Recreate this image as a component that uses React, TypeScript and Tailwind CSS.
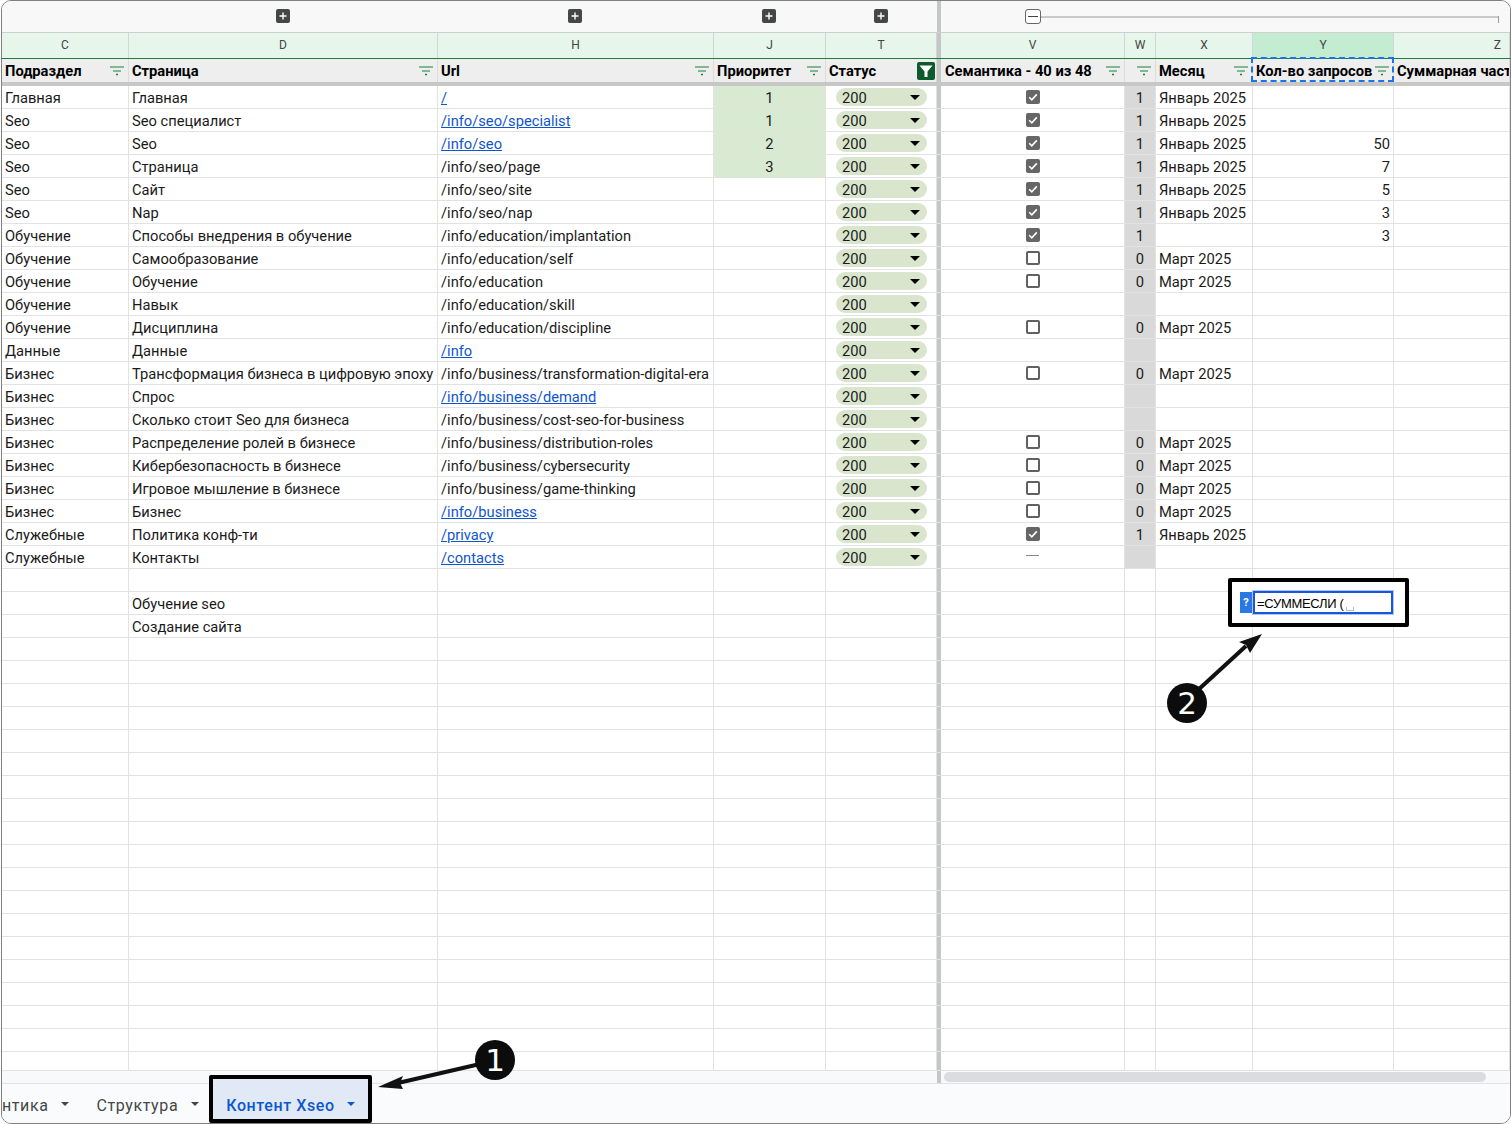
import type { ReactNode } from 'react';

const GRID = 'grid grid-cols-[127px_309px_276px_112px_111px_4px_184px_31px_97px_141px_1fr]';

type Row = {
  sec?: string;
  page?: string;
  url?: string;
  link?: boolean;
  pri?: string;
  check?: 'on' | 'off' | 'dash';
  w?: string;
  month?: string;
  count?: string;
};

const JAN = 'Январь 2025';
const MAR = 'Март 2025';

const rows: Row[] = [
  { sec: 'Главная', page: 'Главная', url: '/', link: true, pri: '1', check: 'on', w: '1', month: JAN },
  { sec: 'Seo', page: 'Seo специалист', url: '/info/seo/specialist', link: true, pri: '1', check: 'on', w: '1', month: JAN },
  { sec: 'Seo', page: 'Seo', url: '/info/seo', link: true, pri: '2', check: 'on', w: '1', month: JAN, count: '50' },
  { sec: 'Seo', page: 'Страница', url: '/info/seo/page', pri: '3', check: 'on', w: '1', month: JAN, count: '7' },
  { sec: 'Seo', page: 'Сайт', url: '/info/seo/site', check: 'on', w: '1', month: JAN, count: '5' },
  { sec: 'Seo', page: 'Nap', url: '/info/seo/nap', check: 'on', w: '1', month: JAN, count: '3' },
  { sec: 'Обучение', page: 'Способы внедрения в обучение', url: '/info/education/implantation', check: 'on', w: '1', count: '3' },
  { sec: 'Обучение', page: 'Самообразование', url: '/info/education/self', check: 'off', w: '0', month: MAR },
  { sec: 'Обучение', page: 'Обучение', url: '/info/education', check: 'off', w: '0', month: MAR },
  { sec: 'Обучение', page: 'Навык', url: '/info/education/skill' },
  { sec: 'Обучение', page: 'Дисциплина', url: '/info/education/discipline', check: 'off', w: '0', month: MAR },
  { sec: 'Данные', page: 'Данные', url: '/info', link: true },
  { sec: 'Бизнес', page: 'Трансформация бизнеса в цифровую эпоху', url: '/info/business/transformation-digital-era', check: 'off', w: '0', month: MAR },
  { sec: 'Бизнес', page: 'Спрос', url: '/info/business/demand', link: true },
  { sec: 'Бизнес', page: 'Сколько стоит Seo для бизнеса', url: '/info/business/cost-seo-for-business' },
  { sec: 'Бизнес', page: 'Распределение ролей в бизнесе', url: '/info/business/distribution-roles', check: 'off', w: '0', month: MAR },
  { sec: 'Бизнес', page: 'Кибербезопасность в бизнесе', url: '/info/business/cybersecurity', check: 'off', w: '0', month: MAR },
  { sec: 'Бизнес', page: 'Игровое мышление в бизнесе', url: '/info/business/game-thinking', check: 'off', w: '0', month: MAR },
  { sec: 'Бизнес', page: 'Бизнес', url: '/info/business', link: true, check: 'off', w: '0', month: MAR },
  { sec: 'Служебные', page: 'Политика конф-ти', url: '/privacy', link: true, check: 'on', w: '1', month: JAN },
  { sec: 'Служебные', page: 'Контакты', url: '/contacts', link: true, check: 'dash' },
];

const TOTAL_ROWS = 43;
const allRows: (Row & { status: boolean; grey: boolean })[] = Array.from({ length: TOTAL_ROWS }, (_, i) => {
  if (i < rows.length) return { ...rows[i], status: true, grey: true };
  if (i === 22) return { page: 'Обучение seo', status: false, grey: false };
  if (i === 23) return { page: 'Создание сайта', status: false, grey: false };
  return { status: false, grey: false };
});

function FilterIcon() {
  return (
    <svg width="14" height="10" viewBox="0 0 14 10" className="shrink-0">
      <path d="M0 1h14M3 5h8" stroke="#188038" strokeWidth="1" fill="none" />
      <path d="M6 8.5h2" stroke="#188038" strokeWidth="1.5" fill="none" />
    </svg>
  );
}

function ActiveFilter() {
  return (
    <span className="-mr-[3px] flex h-[18px] w-[18px] shrink-0 items-center justify-center rounded-[2px] bg-[#0f5a2c]">
      <svg width="16" height="16" viewBox="0 0 16 16">
        <path d="M1.5 2.5h13L9.5 8.5V14h-3V8.5z" fill="#fff" />
      </svg>
    </span>
  );
}

function PlusBox() {
  return (
    <span className="-mt-[1px] flex h-[14px] w-[14px] items-center justify-center rounded-[2px] bg-[#444746]">
      <svg width="10" height="10" viewBox="0 0 10 10">
        <path d="M5 1.5v7M1.5 5h7" stroke="#fff" strokeWidth="1.4" />
      </svg>
    </span>
  );
}

function Checkbox({ on }: { on: boolean }) {
  if (!on) return <span className="block h-[14px] w-[14px] rounded-[2px] border-2 border-[#616161] bg-white" />;
  return (
    <span className="flex h-[14px] w-[14px] items-center justify-center rounded-[2px] bg-[#666]">
      <svg width="12" height="12" viewBox="0 0 12 12">
        <path d="M2.2 6.2l2.6 2.6 5-5.4" stroke="#fff" strokeWidth="1.6" fill="none" />
      </svg>
    </span>
  );
}

function Caret({ className }: { className: string }) {
  return <span className={`block h-0 w-0 border-x-[4px] border-t-[4px] border-x-transparent ${className}`} />;
}

function Letter({ children, active, className = 'justify-center' }: { children: string; active?: boolean; className?: string }) {
  return (
    <div className={`flex items-center border-r border-[#d3d6d8] pb-[2px] text-[12px] text-[#444] ${className} ${active ? 'bg-[#c3ecd0]' : 'bg-[#e6f6ea]'}`}>
      {children}
    </div>
  );
}

function Head({ label, children, className = 'pl-[3px]' }: { label: string; children?: ReactNode; className?: string }) {
  return (
    <div className={`flex items-center justify-between overflow-hidden whitespace-nowrap border-r border-[#dcdcdc] pr-[4px] text-[14.7px] font-bold text-black ${className}`}>
      <span className="pt-[2px]">{label}</span>
      {children}
    </div>
  );
}

function Cell({ children, className = '' }: { children?: ReactNode; className?: string }) {
  return (
    <div className={`flex items-center overflow-hidden whitespace-nowrap border-r border-[#e1e3e3] pl-[3px] pr-[3px] ${className}`}>
      {children}
    </div>
  );
}

function Txt({ children }: { children?: ReactNode }) {
  return <span className="pt-[3px]">{children}</span>;
}

function Divider() {
  return <div className="bg-[#c4c7c5]" />;
}

function Annotations() {
  return (
    <svg className="pointer-events-none absolute left-0 top-0" width="1511" height="1124" viewBox="0 0 1511 1124">
      <path d="M1198 690L1246 646" stroke="#111" strokeWidth="4" fill="none" />
      <path d="M1262 634L1239 642L1246 645L1250 653z" fill="#111" />
      <path d="M480 1064L398 1083" stroke="#111" strokeWidth="4" fill="none" />
      <path d="M378 1087L403 1076L400 1083L403 1089z" fill="#111" />
    </svg>
  );
}

function Marker({ n, className }: { n: string; className: string }) {
  return (
    <span className={`absolute flex h-[40px] w-[40px] items-center justify-center rounded-full bg-[#0c0c0c] font-['DejaVu_Sans',sans-serif] text-[31px] leading-none text-white ${className}`}>
      {n}
    </span>
  );
}

export default function App() {
  return (
    <div className="relative h-[1124px] w-[1511px] overflow-hidden bg-white font-['Roboto',sans-serif] text-[14.7px] leading-none text-[#1a1a1a]">
      <div className="ml-px flex h-[1124px] w-[1510px] flex-col overflow-hidden rounded-[10px] border border-[#808080]">
        {/* outline bar */}
        <div className={`${GRID} h-[32px] shrink-0 border-b border-[#cfcfcf] bg-[#f8f8f8]`}>
          <div />
          <div className="flex items-center justify-end pr-[148px]"><PlusBox /></div>
          <div className="flex items-center justify-end pr-[132px]"><PlusBox /></div>
          <div className="flex items-center justify-center pr-[2px]"><PlusBox /></div>
          <div className="flex items-center justify-center pr-[2px]"><PlusBox /></div>
          <Divider />
          <div className="col-span-5 flex items-center pl-[84px]">
            <span className="flex h-[15px] w-[16px] shrink-0 items-center justify-center rounded-[3px] border border-[#666] bg-white">
              <span className="h-px w-[10px] bg-[#444]" />
            </span>
            <span className="h-[2px] w-[457px] bg-[#c9c9c9]" />
            <span className="mt-[6px] h-[7px] w-px bg-[#999]" />
          </div>
        </div>

        {/* column letters */}
        <div className={`${GRID} h-[26px] shrink-0 border-b border-[#188038]`}>
          <Letter>C</Letter>
          <Letter>D</Letter>
          <Letter>H</Letter>
          <Letter>J</Letter>
          <Letter>T</Letter>
          <Divider />
          <Letter>V</Letter>
          <Letter>W</Letter>
          <Letter>X</Letter>
          <Letter active>Y</Letter>
          <Letter className="justify-end pr-[8px]">Z</Letter>
        </div>

        {/* frozen filter row */}
        <div className={`${GRID} h-[27px] shrink-0 border-b-[4px] border-[#c7c7c7] bg-[#eeeeee]`}>
          <Head label="Подраздел"><FilterIcon /></Head>
          <Head label="Страница"><FilterIcon /></Head>
          <Head label="Url"><FilterIcon /></Head>
          <Head label="Приоритет"><FilterIcon /></Head>
          <Head label="Статус"><ActiveFilter /></Head>
          <Divider />
          <Head label="Семантика - 40 из 48" className="pl-[4px]"><FilterIcon /></Head>
          <div className="flex items-center justify-end border-r border-[#dcdcdc] pr-[4px]"><FilterIcon /></div>
          <Head label="Месяц"><FilterIcon /></Head>
          <div className="relative grid">
            <Head label="Кол-во запросов"><FilterIcon /></Head>
            <span className="absolute -left-[2px] -top-[2px] h-[25px] w-[143px] border-2 border-dashed border-[#1a73e8]" />
          </div>
          <Head label="Суммарная частота" />
        </div>

        {/* body */}
        <div className="min-h-0 flex-1 overflow-hidden">
          {allRows.map((r, i) => (
            <div key={i} className={`${GRID} h-[23px] border-b border-[#e1e3e3]`}>
              <Cell><Txt>{r.sec}</Txt></Cell>
              <Cell><Txt>{r.page}</Txt></Cell>
              <Cell className={r.link ? 'text-[#1155cc] underline' : ''}><Txt>{r.url}</Txt></Cell>
              <Cell className={`justify-center ${r.pri ? 'bg-[#d9ead3]' : ''}`}><Txt>{r.pri}</Txt></Cell>
              <Cell>
                {r.status && (
                  <span className="ml-[7px] flex h-[18px] w-[91px] items-center justify-between rounded-full bg-[#d9e6cd] pl-[6px] pr-[7px]">
                    <Txt>200</Txt>
                    <span className="block h-0 w-0 border-x-[5px] border-t-[5px] border-x-transparent border-t-black" />
                  </span>
                )}
              </Cell>
              <Divider />
              <Cell className="justify-center">
                {r.check === 'on' && <Checkbox on />}
                {r.check === 'off' && <Checkbox on={false} />}
                {r.check === 'dash' && <span className="mb-[3px] h-px w-[13px] bg-[#888]" />}
              </Cell>
              <Cell className={`justify-center ${r.grey ? 'bg-[#d9d9d9]' : ''}`}><Txt>{r.w}</Txt></Cell>
              <Cell><Txt>{r.month}</Txt></Cell>
              <Cell className="justify-end"><Txt>{r.count}</Txt></Cell>
              <Cell />
            </div>
          ))}
        </div>

        {/* horizontal scrollbar band */}
        <div className={`${GRID} h-[14px] shrink-0 border-y border-[#e1e3e3] bg-[#f8f9fa]`}>
          <div className="col-span-5" />
          <Divider />
          <div className="col-span-5 flex items-center pl-[3px]">
            <span className="h-[10px] w-[542px] rounded-full bg-[#dadce0]" />
          </div>
        </div>

        {/* sheet tabs */}
        <div className="flex h-[39px] shrink-0 items-center bg-[#f9fbfd] text-[16px] tracking-[0.6px] text-[#444746]">
          <span className="pt-[5px]">нтика</span>
          <Caret className="ml-[12px] border-t-[#444746]" />
          <span className="ml-[28px] pt-[5px]">Структура</span>
          <Caret className="ml-[13px] border-t-[#444746]" />
          <div className="relative ml-[10px] h-full w-[163px]">
            <div className="absolute left-0 -top-[9px] flex h-[48px] w-[163px] items-center rounded-[2px] border-4 border-black bg-[#e1e9f6] pl-[13px] pt-[9px] font-medium text-[#0b57d0]">
              <span className="pt-[5px]">Контент Xseo</span>
              <Caret className="ml-[12px] border-t-[#0b57d0]" />
            </div>
          </div>
        </div>
      </div>

      <Annotations />
      <Marker n="1" className="left-[475px] top-[1040px]" />
      <Marker n="2" className="left-[1167px] top-[683px]" />

      {/* formula editor callout */}
      <div className="absolute left-[1228px] top-[578px] flex h-[49px] w-[181px] items-center rounded-[2px] border-4 border-black bg-white pl-[8px]">
        <span className="flex h-[21px] w-[12px] items-center justify-center bg-[#2a78e4] text-[11px] font-bold text-white">?</span>
        <div className="flex h-[25px] w-[142px] items-center border border-[#a8c7fa]">
          <div className="relative flex h-[23px] w-full items-center whitespace-nowrap border-2 border-[#1a56d6] bg-white pl-[2px] pt-[2px] font-['Liberation_Sans',sans-serif] text-[13px] tracking-[-0.3px] text-black">
            =СУММЕСЛИ (
            <span className="absolute bottom-[1px] left-[91px] h-[4px] w-[8px] border-x border-b border-[#bbb]" />
          </div>
        </div>
      </div>
    </div>
  );
}
